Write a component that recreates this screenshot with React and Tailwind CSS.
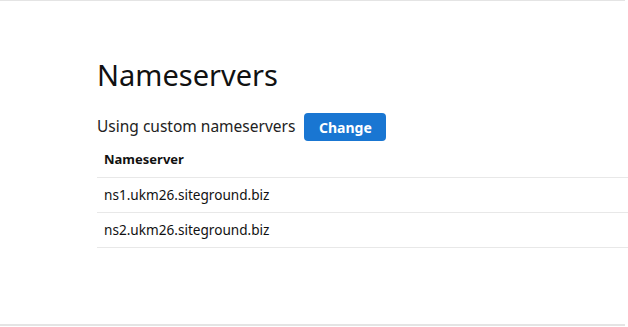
export default function App() {
  const rows = ["ns1.ukm26.siteground.biz", "ns2.ukm26.siteground.biz"];
  return (
    <div
      className="w-[628px] h-[327px] bg-white overflow-hidden"
      style={{ fontFamily: "'Noto Sans', Arial, sans-serif" }}
    >
      <div className="w-[625px] h-[326px] border-t border-b-2 border-[#e4e4e4] pl-[97px] pt-[52px]">
        <h1 className="text-[29px] leading-[44px] text-[#111] font-normal">Nameservers</h1>
        <div className="flex items-center mt-[16px] h-[28px]">
          <span className="text-[15.5px] text-[#222]">Using custom nameservers</span>
          <button className="ml-[9px] h-[28px] w-[82px] rounded-[4px] bg-[#1976d2] text-white text-[14px] font-bold">
            Change
          </button>
        </div>
        <div className="-mr-[3px]">
          <div className="h-[37px] flex items-center pl-[7px] pt-[2px] border-b border-[#e8e8e8] text-[13px] font-bold text-[#111]">
            Nameserver
          </div>
          {rows.map((r) => (
            <div
              key={r}
              className="h-[35px] flex items-center pl-[7px] border-b border-[#e8e8e8] text-[13.6px] text-[#111]"
            >
              {r}
            </div>
          ))}
        </div>
      </div>
    </div>
  );
}
